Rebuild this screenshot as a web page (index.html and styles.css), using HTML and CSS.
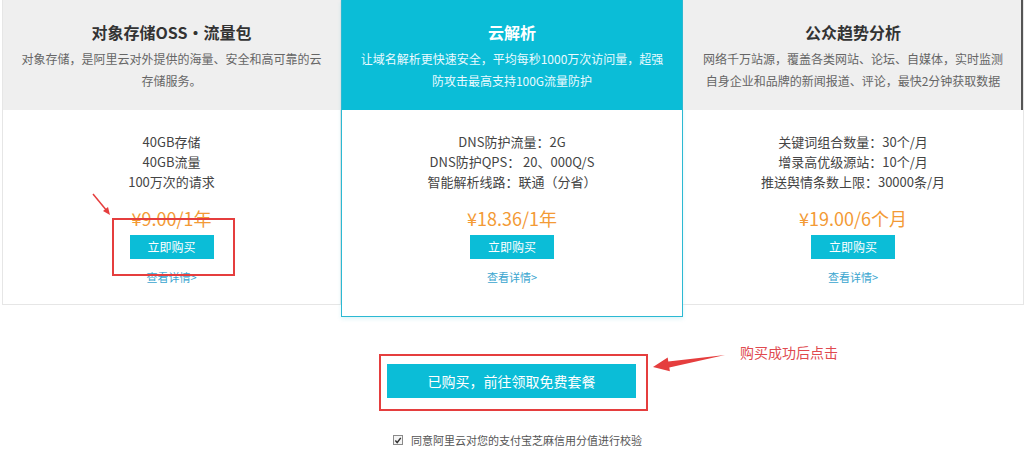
FILE: index.html
```html
<!DOCTYPE html>
<html lang="zh-CN">
<head>
<meta charset="utf-8">
<title>套餐</title>
<link rel="stylesheet" href="styles.css">
</head>
<body>
<div class="page">
  <div class="cards">
    <div class="card">
      <div class="card-head">
        <div class="card-title">对象存储OSS・流量包</div>
        <div class="card-desc">对象存储<span class="p">，</span>是阿里云对外提供的海量、安全和高可靠的云<br>存储服务。</div>
      </div>
      <div class="card-body">
        <div class="specs">
          <div>40GB存储</div>
          <div>40GB流量</div>
          <div>100万次的请求</div>
        </div>
        <div class="price">¥9.00/1年</div>
        <div class="buy-wrap">
          <span class="buy-btn">立即购买</span>
          <span class="mark-box"></span>
          <svg class="mark-arrow" width="24" height="26" viewBox="0 0 24 26">
            <line x1="3" y1="3" x2="17" y2="20" stroke="#e53e3e" stroke-width="1.5"/>
            <polygon points="20,24 13,20 18,16" fill="#e53e3e"/>
          </svg>
        </div>
        <div class="detail">查看详情&gt;</div>
      </div>
    </div>
    <div class="card card-active">
      <div class="card-head">
        <div class="card-title">云解析</div>
        <div class="card-desc">让域名解析更快速安全<span class="p">，</span>平均每秒1000万次访问量<span class="p">，</span>超强<br>防攻击最高支持100G流量防护</div>
      </div>
      <div class="card-body">
        <div class="specs">
          <div>DNS防护流量<span class="p">：</span>2G</div>
          <div>DNS防护QPS<span class="p">：</span> 20、000Q/S</div>
          <div>智能解析线路<span class="p">：</span>联通<span class="p">（</span>分省<span class="p">）</span></div>
        </div>
        <div class="price">¥18.36/1年</div>
        <div class="buy-wrap"><span class="buy-btn">立即购买</span></div>
        <div class="detail">查看详情&gt;</div>
      </div>
    </div>
    <div class="card card-last">
      <div class="card-head">
        <div class="card-title">公众趋势分析</div>
        <div class="card-desc">网络千万站源<span class="p">，</span>覆盖各类网站、论坛、自媒体<span class="p">，</span>实时监测<br>自身企业和品牌的新闻报道、评论<span class="p">，</span>最快2分钟获取数据</div>
      </div>
      <div class="card-body">
        <div class="specs">
          <div>关键词组合数量<span class="p">：</span>30个/月</div>
          <div>增录高优级源站<span class="p">：</span>10个/月</div>
          <div>推送舆情条数上限<span class="p">：</span>30000条/月</div>
        </div>
        <div class="price">¥19.00/6个月</div>
        <div class="buy-wrap"><span class="buy-btn">立即购买</span></div>
        <div class="detail">查看详情&gt;</div>
      </div>
    </div>
  </div>

  <div class="claim">
    <div class="claim-box">
      <span class="claim-btn">已购买<span class="p">，</span>前往领取免费套餐</span>
      <svg class="claim-arrow" width="78" height="22" viewBox="0 0 78 22">
        <polygon points="3,15 17.7,5.5 18.3,9.4 75,3 19.3,15.4 19.9,19.3" fill="#e53e3e"/>
      </svg>
      <span class="claim-note">购买成功后点击</span>
    </div>
  </div>

  <div class="agree">
    <span class="check">
      <svg width="9" height="9" viewBox="0 0 9 9"><path d="M1.5 4.5 L3.6 6.8 L7.6 1.6" fill="none" stroke="#333" stroke-width="1.6"/></svg>
    </span>
    <span class="agree-text">同意阿里云对您的支付宝芝麻信用分值进行校验</span>
  </div>
</div>
</body>
</html>
```

FILE: styles.css
```css
* { box-sizing: border-box; }
html, body { margin: 0; padding: 0; background: #fff; }
body {
  font-family: "Noto Sans CJK SC", "Noto Sans", sans-serif;
  color: #444;
  width: 1024px;
  height: 451px;
  overflow: hidden;
}
.page { width: 1024px; }
.p { font-family: "Noto Sans CJK TC", "Noto Sans CJK SC", sans-serif; }

.cards {
  display: flex;
  align-items: flex-start;
  padding-left: 2px;
}
.card {
  width: 339px;
  border: 1px solid #e6e6e6;
  border-top: none;
  height: 305px;
}
.card-active {
  width: 342px;
  height: 317px;
  border: 1px solid #2cb9d3;
  border-top: none;
  box-shadow: 0 2px 4px rgba(40, 185, 210, 0.15);
}
.card-last {
  width: 341px;
  border-left: none;
  border-right: 1px solid #e6e6e6;
}
.card-head {
  height: 110px;
  background: #efefef;
  padding-top: 20px;
  text-align: center;
}
.card-last .card-head {
  box-shadow: inset -2px 0 0 #555;
}
.card-active .card-head {
  background: #0bbdd7;
  color: #fff;
}
.card-title {
  font-size: 16px;
  font-weight: bold;
  line-height: 24px;
  color: #333;
  margin-bottom: 4px;
}
.card-active .card-title { color: #fff; }
.card-desc {
  font-size: 12px;
  line-height: 22px;
  color: #666;
}
.card-active .card-desc { color: #eafaff; }

.card-body {
  padding-top: 22px;
  text-align: center;
}
.specs {
  font-size: 13px;
  line-height: 20px;
  color: #444;
}
.price {
  margin-top: 14px;
  font-size: 18px;
  line-height: 24px;
  color: #f39a35;
}
.buy-wrap {
  position: relative;
  margin: 5px auto 0;
  width: 84px;
  height: 24px;
}
.buy-btn {
  display: block;
  width: 84px;
  height: 24px;
  line-height: 24px;
  background: #0bbdd7;
  color: #fff;
  font-size: 12px;
}
.mark-box {
  position: absolute;
  left: -18px;
  top: -17px;
  width: 123px;
  height: 58px;
  border: 2px solid #e53e3e;
}
.mark-arrow {
  position: absolute;
  left: -40px;
  top: -44px;
}
.detail {
  margin-top: 10px;
  font-size: 11px;
  line-height: 16px;
  color: #3aa5cf;
}

.claim {
  display: flex;
  justify-content: center;
  margin-top: 37px;
  padding-left: 3px;
}
.claim-box {
  position: relative;
  border: 2px solid #e53e3e;
  padding: 8px 10px 11px 6px;
}
.claim-btn {
  display: block;
  width: 249px;
  height: 34px;
  line-height: 34px;
  background: #0bbdd7;
  color: #fff;
  font-size: 14px;
  text-align: center;
}
.claim-arrow {
  position: absolute;
  left: 269px;
  top: -4px;
}
.claim-note {
  position: absolute;
  left: 359px;
  top: -14px;
  white-space: nowrap;
  font-size: 14px;
  line-height: 20px;
  color: #e04a4f;
}

.agree {
  display: flex;
  align-items: center;
  margin-top: 22px;
  padding-left: 393px;
  height: 14px;
}
.check {
  display: flex;
  align-items: center;
  justify-content: center;
  width: 10px;
  height: 10px;
  border: 1px solid #8a8a8a;
  background: #f4f4f4;
  margin-right: 8px;
}
.agree-text {
  font-size: 11px;
  line-height: 14px;
  color: #555;
}
```
